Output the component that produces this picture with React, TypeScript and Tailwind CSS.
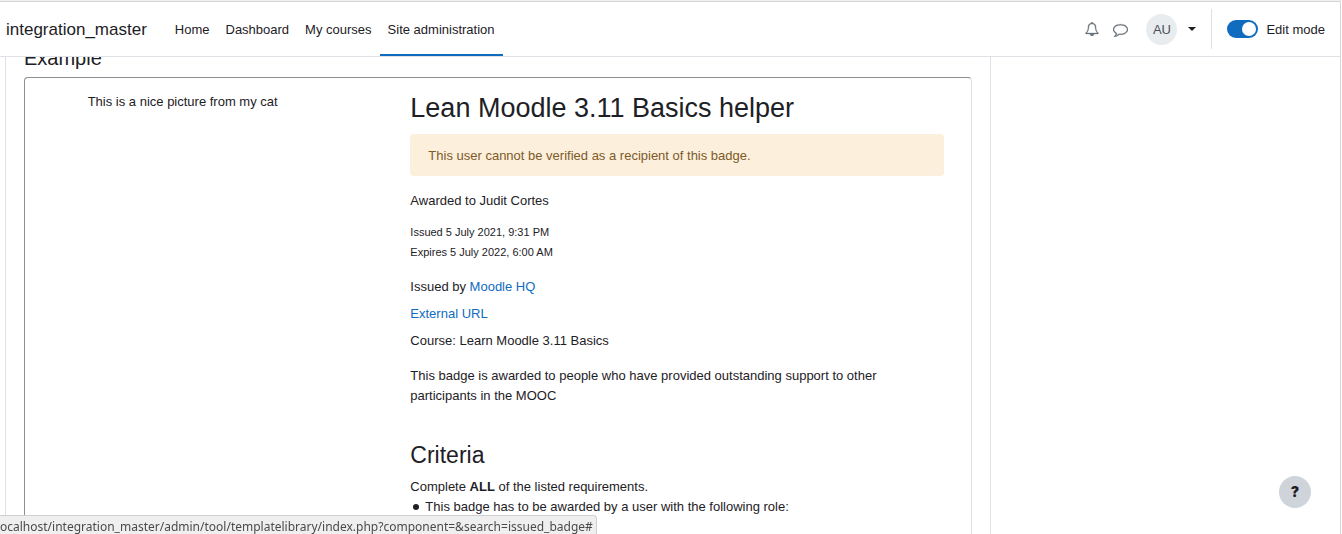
import type { ReactNode } from "react";

const navItems = [
    { label: "Home", active: false },
    { label: "Dashboard", active: false },
    { label: "My courses", active: false },
    { label: "Site administration", active: true },
];

function BellIcon() {
    return (
        <svg viewBox="0 0 1792 1792" className="size-3.5 fill-current stroke-current" strokeWidth="40" aria-hidden="true">
            <path d="M912 1696q0-16-16-16-59 0-101.500-42.500t-42.500-101.500q0-16-16-16t-16 16q0 73 51.500 124.500t124.500 51.500q16 0 16-16zm-666-288h1300q-266-300-266-832 0-51-24-105t-69-103-121.500-80.500-169.500-31.500-169.500 31.500-121.500 80.500-69 103-24 105q0 532-266 832zm1482 0q0 52-38 90t-90 38h-448q0 106-75 181t-181 75-181-75-75-181h-448q-52 0-90-38t-38-90q50-42 91-88t85-119.500 74.500-158.500 50-206 19.500-260q0-152 117-282.500t307-158.500q-8-19-8-39 0-40 28-68t68-28 68 28 28 68q0 20-8 39 190 28 307 158.500t117 282.500q0 139 19.500 260t50 206 74.500 158.500 85 119.500 91 88z" />
        </svg>
    );
}

function CommentIcon() {
    return (
        <svg viewBox="0 0 1792 1792" className="size-[15px] fill-current stroke-current" strokeWidth="30" aria-hidden="true">
            <path d="M896 384q-204 0-381.500 69.500t-282 187.500-104.500 255q0 112 71.500 213.500t201.500 175.500l87 50-27 96q-24 91-70 172 152-63 275-171l43-38 57 6q69 8 130 8 204 0 381.500-69.500t282-187.500 104.500-255-104.500-255-282-187.500-381.500-69.500zm896 512q0 174-120 321.500t-326 233-450 85.500q-70 0-145-8-198 175-460 242-49 14-114 22h-5q-15 0-27-10.500t-16-27.500v-1q-3-4-.5-12t2-10 4.500-9.500l6-9 7-8.500 8-9q7-8 31-34.500t34.500-38 31-39.500 32.500-51 27-59 26-76q-157-89-247.500-220t-90.500-281q0-174 120-321.500t326-233 450-85.500 450 85.500 326 233 120 321.500z" />
        </svg>
    );
}

function Navbar() {
    return (
        <header className="flex h-[55px] shrink-0 items-stretch border-b border-[#dee2e6] bg-white pl-1.5 pr-[15px]">
            <a href="#" className="mr-5 flex items-center pt-0.5 text-[17px]">integration_master</a>
            <nav className="flex">
                {navItems.map((item) => (
                    <a
                        key={item.label}
                        href="#"
                        className={item.active
                            ? "flex items-center border-b-2 border-[#0f6cbf] px-2 pt-1"
                            : "flex items-center px-2 pt-0.5"}
                    >
                        {item.label}
                    </a>
                ))}
            </nav>

            <div className="ml-auto flex items-center">
                <button type="button" aria-label="Notifications" className="mr-3.5 text-[#6a737b]">
                    <BellIcon />
                </button>
                <button type="button" aria-label="Messages" className="mr-[18px] text-[#6a737b]">
                    <CommentIcon />
                </button>
                <button type="button" aria-label="User menu" className="flex items-center gap-[11px]">
                    <span className="flex size-[31px] items-center justify-center rounded-full bg-[#e9ecef] pt-0.5 text-[#495057]">AU</span>
                    <svg viewBox="0 0 8 4" className="h-1 w-2 fill-current" aria-hidden="true">
                        <path d="M0 0h8L4 4z" />
                    </svg>
                </button>
                <div className="mx-[15px] h-10 w-px bg-[#dee2e6]" />
                <label className="flex items-center gap-2">
                    <input
                        type="checkbox"
                        defaultChecked
                        className="flex h-[18px] w-[31px] appearance-none items-center rounded-full bg-[#adb5bd] px-0.5 before:size-3.5 before:rounded-full before:bg-white checked:justify-end checked:bg-[#0f6cbf]"
                    />
                    <span className="pt-0.5">Edit mode</span>
                </label>
            </div>
        </header>
    );
}

function Link({ children }: { children: ReactNode }) {
    return <a href="#" className="text-[#0f6cbf]">{children}</a>;
}

function BadgeDetails() {
    return (
        <div className="w-2/3 pl-[70px] pr-[27px]">
            <h1 className="mt-3 text-[27px] leading-9">Lean Moodle 3.11 Basics helper</h1>
            <div role="alert" className="mt-2 rounded bg-[#fcefdc] px-[18px] pb-2.5 pt-3 text-[#7d5a29]">
                This user cannot be verified as a recipient of this badge.
            </div>
            <p className="mt-[15px]">Awarded to Judit Cortes</p>
            <div className="mt-[11px] text-[11px] leading-5">
                <p>Issued 5 July 2021, 9:31 PM</p>
                <p>Expires 5 July 2022, 6:00 AM</p>
            </div>
            <div className="mt-[15px] space-y-[7px]">
                <p>Issued by <Link>Moodle HQ</Link></p>
                <p><Link>External URL</Link></p>
                <p>Course: Learn Moodle 3.11 Basics</p>
            </div>
            <p className="mt-[15px]">
                This badge is awarded to people who have provided outstanding support to other participants in the MOOC
            </p>
            <h2 className="mt-[33px] text-[23px] leading-8">Criteria</h2>
            <p className="mt-1.5">Complete <strong>ALL</strong> of the listed requirements.</p>
            <ul>
                <li className="flex items-center gap-1.5 pl-[3px]">
                    <span className="size-1.5 rounded-full bg-current" />
                    This badge has to be awarded by a user with the following role:
                </li>
            </ul>
        </div>
    );
}

export default function App() {
    return (
        <div className="flex h-screen flex-col overflow-hidden border-t border-[#f0f0f0] bg-white font-['Liberation_Sans',Arial,sans-serif] text-[13px] leading-5 text-[#1d2125]">
            <div className="mr-px flex min-h-0 flex-1 flex-col border-r border-t border-[#d5d5d5]">
                <Navbar />
                <main className="flex min-h-0 flex-1 overflow-hidden pl-[5px]">
                    <section className="flex min-w-0 flex-1 flex-col border-x border-[#dee2e6] px-[18px]">
                        <h3 className="-mt-2.5 mb-2 text-xl leading-[22px]">Example</h3>
                        <div className="flex flex-1 rounded-t border border-b-0 border-[#dee2e6] border-l-[#8f8f8f] border-t-[#8f8f8f]">
                            <p className="mt-[14px] w-1/3 text-center">This is a nice picture from my cat</p>
                            <BadgeDetails />
                        </div>
                    </section>
                    <aside className="w-[349px] shrink-0" />
                </main>
            </div>

            <button
                type="button"
                aria-label="Help"
                className="fixed bottom-[26px] right-[31px] size-8 rounded-full bg-[#ced4da] font-['Inter',sans-serif] text-sm font-black"
            >
                ?
            </button>
            <div className="fixed bottom-0 left-0 h-[19px] rounded-tr border-r border-t border-[#cfcfcf] bg-[#efefef] pr-[3px] font-['Noto_Sans',sans-serif] text-xs leading-[22px] text-[#4a4a4a]">
                ocalhost/integration_master/admin/tool/templatelibrary/index.php?component=&amp;search=issued_badge#
            </div>
        </div>
    );
}
